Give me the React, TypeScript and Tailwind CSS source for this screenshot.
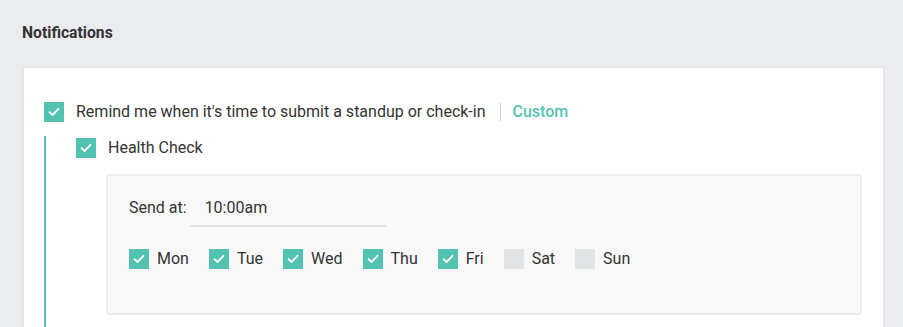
import React from "react";

const days = [
  { name: "Mon", on: true },
  { name: "Tue", on: true },
  { name: "Wed", on: true },
  { name: "Thu", on: true },
  { name: "Fri", on: true },
  { name: "Sat", on: false },
  { name: "Sun", on: false },
];

function Check({ on }: { on: boolean }) {
  return (
    <span
      className={`flex h-5 w-5 shrink-0 items-center justify-center ${
        on ? "bg-[#52c3b1]" : "bg-[#e1e4e4]"
      }`}
    >
      {on && (
        <svg width="12" height="10" viewBox="0 0 12 10" fill="none">
          <path d="M1.5 5.2 4.5 8 10.5 1.8" stroke="#fff" strokeWidth="1.8" strokeLinecap="round" strokeLinejoin="round" />
        </svg>
      )}
    </span>
  );
}

export default function App() {
  return (
    <div className="h-[327px] w-[903px] overflow-hidden bg-[#ebecef] pl-[22px] font-['Roboto',sans-serif] text-[#333]">
      <h2 className="pt-[24px] text-[15.7px] font-bold leading-[18px] text-[#333]">Notifications</h2>

      <div className="mt-[24px] h-[300px] w-[863px] border-2 border-[#e3e5e6] bg-white pl-[20px] pt-[34px]">
        {/* top-level reminder */}
        <div className="flex h-5 items-center">
          <Check on />
          <span className="ml-3 text-[16px] leading-[22px]">Remind me when it's time to submit a standup or check-in</span>
          <span className="ml-[14px] h-[18px] w-px bg-[#c5cfd3]" />
          <span className="ml-3 text-[16px] font-medium leading-[22px] text-[#52c3b1]">Custom</span>
        </div>

        <div className="mt-[14px] h-[220px] border-l-2 border-[#52c3b1] pl-[30px] pt-[2px]">
          <div className="flex h-5 items-center">
            <Check on />
            <span className="ml-3 text-[16px] leading-[22px]">Health Check</span>
          </div>

          <div className="ml-[30px] mt-[16px] h-[141px] w-[756px] rounded-[3px] border-2 border-[#ebeced] bg-[#f8f8f8] pl-[21px] pt-[22px]">
            <div className="flex items-baseline">
              <span className="text-[16px] leading-5">Send at:</span>
              <div className="ml-[3px] w-[197px] border-b-2 border-[#e1e4e4] pb-[7px] pl-[15px] text-[16px] leading-5">
                10:00am
              </div>
            </div>

            <div className="mt-[22px] flex items-center">
              {days.map((d) => (
                <label key={d.name} className="mr-5 flex h-5 items-center">
                  <Check on={d.on} />
                  <span className="ml-2 text-[16px] leading-[22px]">{d.name}</span>
                </label>
              ))}
            </div>
          </div>
        </div>
      </div>
    </div>
  );
}
